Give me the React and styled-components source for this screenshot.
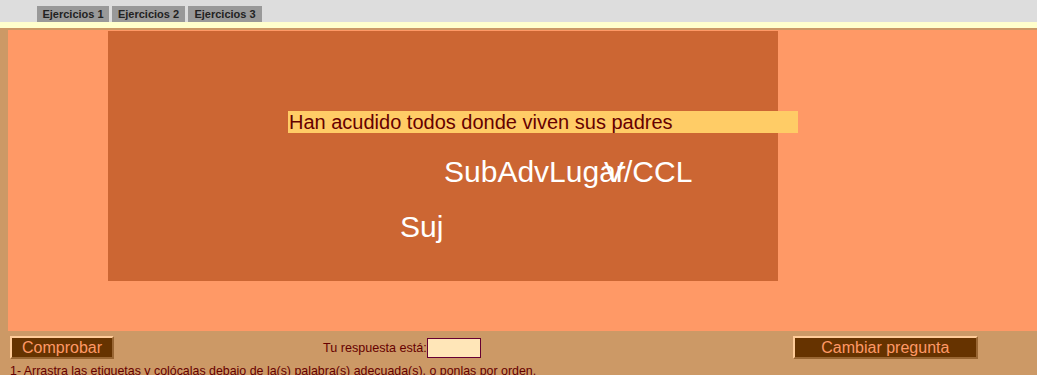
import styled, { createGlobalStyle } from "styled-components"

const GlobalStyle = createGlobalStyle`
    html, body {
        margin: 0;
        padding: 0;
        overflow: hidden;
        background: #cc9966;
        font-family: "Liberation Sans", Arial, sans-serif;
    }
`

const TabBar = styled.div`
    height: 22px;
    background-color: #dddddd;
    display: flex;
    align-items: flex-end;
    gap: 3px;
    padding-left: 37px;
`

const Tab = styled.div`
    width: ${(p) => p.w}px;
    height: 16px;
    background-color: #999999;
    color: #222222;
    font-size: 11px;
    font-weight: bold;
    line-height: 16px;
    text-align: center;
`

const Strip = styled.div`
    height: 6px;
    background-color: #ffffcc;
`

const Frame = styled.div`
    background-color: #cc9966;
    padding: 2px 0 0 8px;
`

const Stage = styled.div`
    height: 300px;
    background-color: #ff9966;
    padding: 1px 0 0 100px;
`

const Board = styled.div`
    position: relative;
    width: 670px;
    height: 250px;
    background-color: #cc6633;
`

const Sentence = styled.div`
    position: absolute;
    left: 180px;
    top: 80px;
    width: 509px;
    height: 22px;
    padding-left: 1px;
    background-color: #ffcc66;
    color: #660000;
    font-size: 20px;
    line-height: 22px;
    white-space: nowrap;
`

const Label = styled.div`
    position: absolute;
    left: ${(p) => p.x}px;
    top: ${(p) => p.y}px;
    color: #ffffff;
    font-size: 30px;
    line-height: 34px;
    white-space: nowrap;
    cursor: move;
`

const Footer = styled.div`
    height: 44px;
    background-color: #cc9966;
    color: #660000;
`

const Controls = styled.div`
    display: flex;
    align-items: center;
    height: 33px;
    padding-left: 10px;
`

const Button = styled.button`
    width: ${(p) => p.w}px;
    height: 23px;
    margin-left: ${(p) => p.ml || 0}px;
    padding: 0;
    border: 2px solid;
    border-color: #ffcc99 #996633 #996633 #ffcc99;
    background-color: #663300;
    color: #ff9966;
    font-family: "Liberation Sans", Arial, sans-serif;
    font-size: 16px;
    line-height: 18px;
    cursor: pointer;
`

const Answer = styled.div`
    display: flex;
    align-items: center;
    margin-left: 209px;
    font-size: 12.6px;
`

const AnswerBox = styled.div`
    width: 52px;
    height: 18px;
    border: 1px solid #660033;
    background-color: #ffe6b8;
`

const Hint = styled.div`
    padding-left: 10px;
    font-size: 12.4px;
    line-height: 14px;
    white-space: nowrap;
`

const App = () => {
  return (
    <>
      <GlobalStyle />
      <TabBar>
        <Tab w={72}>Ejercicios 1</Tab>
        <Tab w={73}>Ejercicios 2</Tab>
        <Tab w={74}>Ejercicios 3</Tab>
      </TabBar>
      <Strip />
      <Frame>
        <Stage>
          <Board>
            <Sentence>Han acudido todos donde viven sus padres</Sentence>
            <Label x={336} y={124}>SubAdvLugar</Label>
            <Label x={496} y={124}>V/CCL</Label>
            <Label x={292} y={179}>Suj</Label>
          </Board>
        </Stage>
      </Frame>
      <Footer>
        <Controls>
          <Button w={104}>Comprobar</Button>
          <Answer>
            Tu respuesta está:
            <AnswerBox />
          </Answer>
          <Button w={185} ml={312}>Cambiar pregunta</Button>
        </Controls>
        <Hint>1- Arrastra las etiquetas y colócalas debajo de la(s) palabra(s) adecuada(s), o ponlas por orden.</Hint>
      </Footer>
    </>
  )
}

export default App
